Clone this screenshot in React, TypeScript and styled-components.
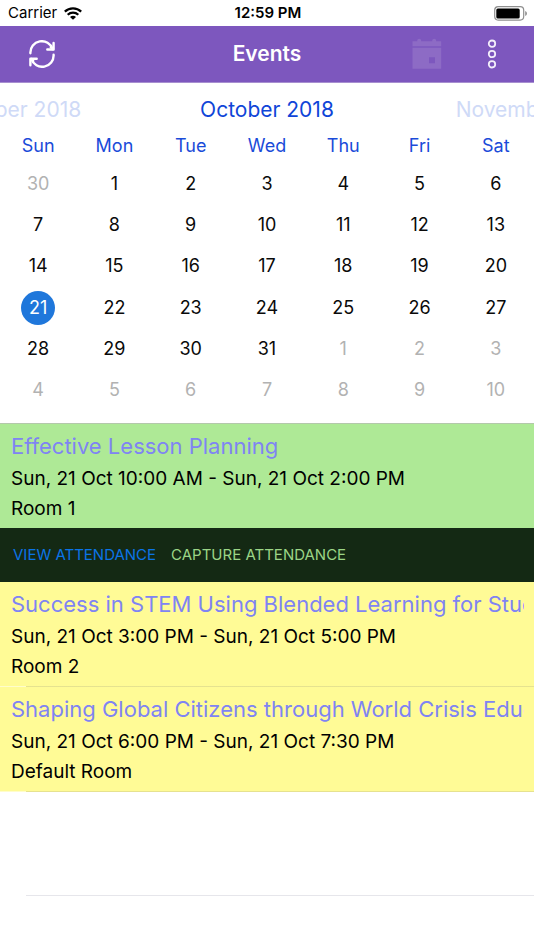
import React from "react";
import styled, { createGlobalStyle, css } from "styled-components";

const GlobalStyle = createGlobalStyle`
  *, *::before, *::after { box-sizing: border-box; }
  body {
    margin: 0;
    background: #ffffff;
    color: #000000;
    font-family: Inter, "Liberation Sans", sans-serif;
    -webkit-font-smoothing: antialiased;
  }
  button {
    margin: 0;
    padding: 0;
    border: 0;
    background: none;
    color: inherit;
    font: inherit;
    cursor: pointer;
  }
`;

const Screen = styled.div`
  display: flex;
  flex-direction: column;
  min-height: 100vh;
  overflow-x: hidden;
`;

const StatusBar = styled.div`
  display: grid;
  grid-template-columns: 1fr auto 1fr;
  align-items: center;
  height: 26px;
  padding: 0 6px 0 8px;
  font-size: 15px;
  line-height: 26px;
`;

const StatusGroup = styled.div<{ $end?: boolean }>`
  display: flex;
  align-items: center;
  gap: 7px;
  justify-content: ${(p) => (p.$end ? "flex-end" : "flex-start")};
`;

const Clock = styled.time`
  font-size: 15px;
  font-weight: 600;
`;

const NavBar = styled.header`
  display: grid;
  grid-template-columns: 1fr auto 1fr;
  align-items: center;
  height: 57px;
  padding: 0 24px;
  background: #7d57be;
  border-bottom: 1px solid #a78fd0;
  color: #ffffff;
`;

const NavGroup = styled.div<{ $end?: boolean }>`
  display: flex;
  align-items: center;
  gap: 29px;
  justify-content: ${(p) => (p.$end ? "flex-end" : "flex-start")};
`;

const NavTitle = styled.h1`
  margin: 0;
  font-size: 21px;
  line-height: 28px;
  font-weight: 600;
`;

const IconButton = styled.button`
  display: grid;
  place-items: center;
  width: 36px;
  height: 40px;
  &:disabled { cursor: default; }
`;

const Calendar = styled.section`
  border-bottom: 1px solid #b4c8ab;
  padding-bottom: 12px;
`;

const MonthStrip = styled.div`
  display: flex;
  justify-content: center;
  overflow: hidden;
  height: 45px;
  padding-top: 9px;
`;

const MonthSlot = styled.div`
  flex: 0 0 50%;
  text-align: center;
`;

const monthText = css`
  font-size: 21px;
  line-height: 36px;
  font-weight: 400;
  white-space: nowrap;
`;

const CurrentMonth = styled.h2`
  ${monthText}
  margin: 0;
  color: #0f45d8;
`;

const AdjacentMonth = styled.button`
  && {
    ${monthText}
    color: #cfdaf7;
  }
`;

const MonthTable = styled.table`
  width: 100%;
  height: 283px;
  table-layout: fixed;
  border-collapse: collapse;
`;

const Weekday = styled.th`
  height: 35px;
  padding: 0;
  color: #1a4bd9;
  font-size: 18px;
  line-height: 24px;
  font-weight: 400;
`;

const DayCell = styled.td`
  height: 41px;
  padding: 0;
  text-align: center;
`;

const DayButton = styled.button<{ $muted?: boolean; $selected?: boolean }>`
  && {
    display: block;
    width: 34px;
    height: 34px;
    margin: 0 auto;
    border-radius: 50%;
    font-size: 18px;
    line-height: 34px;
    text-align: center;
    color: ${(p) => (p.$selected ? "#ffffff" : p.$muted ? "#b2b2b2" : "#0a0a0a")};
    background: ${(p) => (p.$selected ? "#1f77db" : "transparent")};
  }
`;

const EventList = styled.ul`
  list-style: none;
  margin: 0;
  padding: 0;
`;

const separator = css`
  &::after {
    content: "";
    display: block;
    height: 1px;
    background: linear-gradient(
      to right,
      rgba(255, 255, 255, 0.5) 26px,
      rgba(60, 60, 100, 0.13) 26px
    );
  }
`;

const EventItem = styled.li<{ $tone: "green" | "yellow" }>`
  background: ${(p) => (p.$tone === "green" ? "#aee996" : "#fffb96")};
  ${(p) => p.$tone === "yellow" && separator}
`;

const EmptyItem = styled.li`
  height: 104px;
  display: flex;
  flex-direction: column;
  justify-content: flex-end;
  ${separator}
`;

const EventBody = styled.div`
  padding: 6px 10px 4px 11px;
`;

const EventTitle = styled.h3`
  margin: 0 0 2px;
  overflow: hidden;
  white-space: nowrap;
  color: #7f84f3;
  font-size: 22px;
  line-height: 32px;
  font-weight: 400;
`;

const EventLine = styled.p`
  margin: 0;
  font-size: 19px;
  line-height: 30px;
`;

const ActionBar = styled.div`
  display: flex;
  align-items: center;
  gap: 15px;
  height: 54px;
  padding: 0 13px;
  background: #142914;
`;

const ActionButton = styled.button<{ $primary?: boolean }>`
  && {
    font-size: 15px;
    line-height: 24px;
    text-transform: uppercase;
    color: ${(p) => (p.$primary ? "#0b74e6" : "#9bd586")};
  }
`;

function WifiIcon() {
  return (
    <svg width="18" height="13" viewBox="0 0 18 13" fill="none" stroke="#000" strokeWidth="2.2" aria-hidden="true">
      <path d="M.8 4.6C5.4.2 12.6.2 17.2 4.6" />
      <path d="M3.7 7.700c3-2.900 7.600-2.900 10.600 0" />
      <path d="M9 12.800 6 9.900c1.700-1.600 4.300-1.600 6 0Z" fill="#000" stroke="none" />
    </svg>
  );
}

function BatteryIcon() {
  return (
    <svg width="34" height="15" viewBox="0 0 34 15" aria-hidden="true">
      <rect x=".7" y=".7" width="29" height="13.400" rx="3.500" fill="#fff" stroke="#8f8f8f" strokeWidth="1.200" />
      <rect x="2.300" y="2.400" width="23.400" height="10" rx="1.500" fill="#000" />
      <path d="M31.200 5c2.300.7 2.300 4.200 0 4.900Z" fill="#8f8f8f" />
    </svg>
  );
}

function RefreshIcon() {
  return (
    <svg width="28" height="28" viewBox="0 0 28 28" fill="none" stroke="#fff" strokeWidth="2.400" strokeLinecap="round" strokeLinejoin="round" aria-hidden="true">
      <path d="M2.400 13.200A11.400 11.400 0 0 1 24.600 9" />
      <path d="M25.600 3v6.500h-6.300" />
      <path d="m22.800 7.300 2.200 1.700" />
      <path d="M25.600 14.800A11.400 11.400 0 0 1 3.400 19" />
      <path d="M2.400 25.200v-6.500h6.300" />
      <path d="m5.200 20.900-2.200-1.700" />
    </svg>
  );
}

function EventDayIcon() {
  return (
    <svg width="30" height="32" viewBox="0 0 30 32" fill="#8d6bc5" aria-hidden="true">
      <path d="M.5 3.200h4.700v-.4a2 2 0 0 1 4 0v.4h11v-.4a2 2 0 0 1 4 0v.4h5v5H.5Z" />
      <path fillRule="evenodd" d="M.5 9.700h28.700v21H.5ZM17 19.200v6h6v-6Z" />
    </svg>
  );
}

function MoreIcon() {
  return (
    <svg width="10" height="30" viewBox="0 0 10 30" fill="none" stroke="#f3effa" strokeWidth="1.800" aria-hidden="true">
      <circle cx="5" cy="4.700" r="3.200" />
      <circle cx="5" cy="15" r="3.200" />
      <circle cx="5" cy="25.300" r="3.200" />
    </svg>
  );
}

const weekdays = ["Sun", "Mon", "Tue", "Wed", "Thu", "Fri", "Sat"];

const firstShown = new Date(2018, 8, 30);
const weeks = Array.from({ length: 6 }, (_, w) =>
  Array.from({ length: 7 }, (_, d) => {
    const date = new Date(firstShown);
    date.setDate(firstShown.getDate() + w * 7 + d);
    return date;
  })
);

type SchoolEvent = {
  title: string;
  when: string;
  room: string;
  tone: "green" | "yellow";
  actions?: boolean;
};

const events: SchoolEvent[] = [
  {
    title: "Effective Lesson Planning",
    when: "Sun, 21 Oct 10:00 AM - Sun, 21 Oct 2:00 PM",
    room: "Room 1",
    tone: "green",
    actions: true,
  },
  {
    title: "Success in STEM Using Blended Learning for Students",
    when: "Sun, 21 Oct 3:00 PM - Sun, 21 Oct 5:00 PM",
    room: "Room 2",
    tone: "yellow",
  },
  {
    title: "Shaping Global Citizens through World Crisis Education",
    when: "Sun, 21 Oct 6:00 PM - Sun, 21 Oct 7:30 PM",
    room: "Default Room",
    tone: "yellow",
  },
];

export default function App() {
  const [selected, setSelected] = React.useState(new Date(2018, 9, 21).getTime());

  return (
    <>
      <GlobalStyle />
      <Screen>
        <StatusBar>
          <StatusGroup>
            <span>Carrier</span>
            <WifiIcon />
          </StatusGroup>
          <Clock>12:59 PM</Clock>
          <StatusGroup $end>
            <BatteryIcon />
          </StatusGroup>
        </StatusBar>
        <NavBar>
          <NavGroup>
            <IconButton aria-label="Refresh">
              <RefreshIcon />
            </IconButton>
          </NavGroup>
          <NavTitle>Events</NavTitle>
          <NavGroup $end>
            <IconButton aria-label="Today" disabled>
              <EventDayIcon />
            </IconButton>
            <IconButton aria-label="More options">
              <MoreIcon />
            </IconButton>
          </NavGroup>
        </NavBar>
        <main>
          <Calendar aria-label="Calendar">
            <MonthStrip>
              <MonthSlot>
                <AdjacentMonth>September 2018</AdjacentMonth>
              </MonthSlot>
              <MonthSlot>
                <CurrentMonth>October 2018</CurrentMonth>
              </MonthSlot>
              <MonthSlot>
                <AdjacentMonth>November 2018</AdjacentMonth>
              </MonthSlot>
            </MonthStrip>
            <MonthTable>
              <thead>
                <tr>
                  {weekdays.map((name) => (
                    <Weekday key={name} scope="col">{name}</Weekday>
                  ))}
                </tr>
              </thead>
              <tbody>
                {weeks.map((week) => (
                  <tr key={week[0].getTime()}>
                    {week.map((date) => (
                      <DayCell key={date.getTime()}>
                        <DayButton
                          $muted={date.getMonth() !== 9}
                          $selected={date.getTime() === selected}
                          aria-pressed={date.getTime() === selected}
                          onClick={() => setSelected(date.getTime())}
                        >
                          {date.getDate()}
                        </DayButton>
                      </DayCell>
                    ))}
                  </tr>
                ))}
              </tbody>
            </MonthTable>
          </Calendar>
          <EventList>
            {events.map((event) => (
              <EventItem key={event.title} $tone={event.tone}>
                <EventBody>
                  <EventTitle>{event.title}</EventTitle>
                  <EventLine>{event.when}</EventLine>
                  <EventLine>{event.room}</EventLine>
                </EventBody>
                {event.actions && (
                  <ActionBar>
                    <ActionButton $primary>View attendance</ActionButton>
                    <ActionButton>Capture attendance</ActionButton>
                  </ActionBar>
                )}
              </EventItem>
            ))}
            <EmptyItem aria-hidden="true" />
          </EventList>
        </main>
      </Screen>
    </>
  );
}
